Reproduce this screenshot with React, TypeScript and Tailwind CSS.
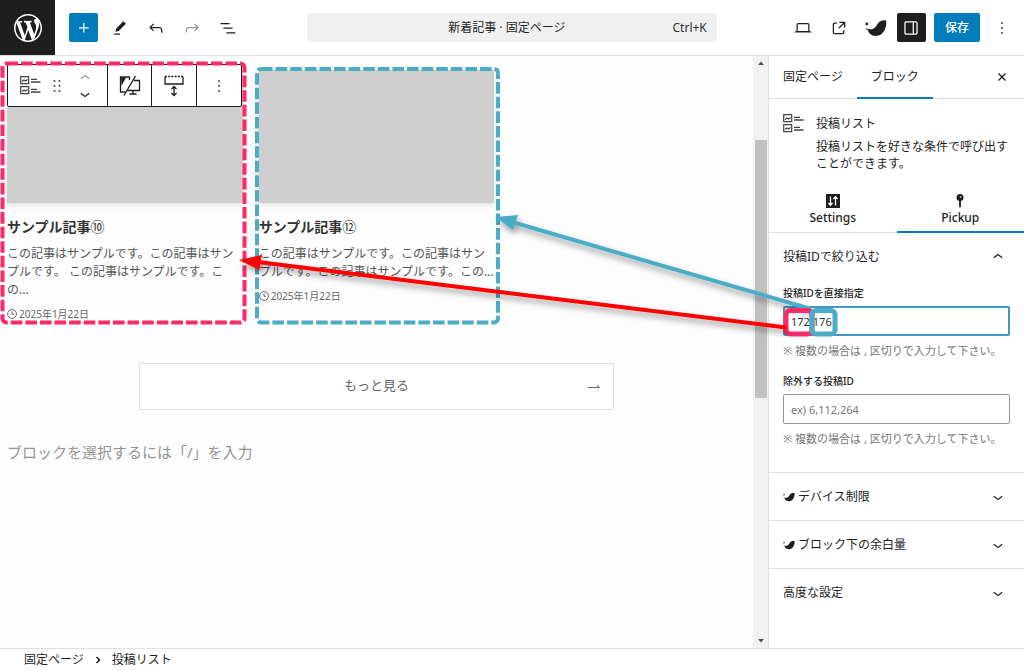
import { useState, type ReactNode } from "react";

const ICONS = {
  plus: "M11 12.5V17.5H12.5V12.5H17.5V11H12.5V6H11V11H6V12.5H11Z",
  pencil: "m19 7-3-3-8.5 8.5-1 4 4-1L19 7Zm-7 11.5H5V20h7v-1.5Z",
  undo: "M18.3 11.7c-.6-.6-1.4-.9-2.3-.9H6.7l2.9-3.3-1.1-1-4.5 5L8.5 16l1-1-2.7-2.7H16c.5 0 .9.2 1.3.5 1 1 1 3.4 1 4.5v.3h1.5v-.2c0-1.5 0-4.3-1.5-5.7z",
  redo: "M15.6 6.5l-1.1 1 2.9 3.3H8c-.9 0-1.7.3-2.3.9-1.4 1.5-1.4 4.2-1.4 5.6v.2h1.5v-.3c0-1.1 0-3.5 1-4.5.3-.3.7-.5 1.3-.5h9.2L14.5 15l1.1 1.1 4.6-4.6-4.6-5z",
  listView: "M3 6h11v1.5H3V6Zm3.5 5.5h11V13h-11v-1.5ZM21 17H10v1.5h11V17Z",
  desktop: "M20.5 16h-.7V8c0-1.1-.9-2-2-2H6.2c-1.1 0-2 .9-2 2v8h-.7c-.8 0-1.5.7-1.5 1.5h20c0-.8-.7-1.5-1.5-1.5zM5.7 8c0-.3.2-.5.5-.5h11.6c.3 0 .5.2.5.5v7.6H5.7V8z",
  external: "M19.5 4.5h-7V6h4.44l-5.97 5.97 1.06 1.06L18 7.06v4.44h1.5v-7Zm-13 1a2 2 0 0 0-2 2v10a2 2 0 0 0 2 2h10a2 2 0 0 0 2-2v-3H17v3a.5.5 0 0 1-.5.5h-10a.5.5 0 0 1-.5-.5v-10a.5.5 0 0 1 .5-.5h3V5.5h-3Z",
  drawer: "M18 4H6c-1.1 0-2 .9-2 2v12c0 1.1.9 2 2 2h12c1.1 0 2-.9 2-2V6c0-1.1-.9-2-2-2zm-4 14.5H6c-.3 0-.5-.2-.5-.5V6c0-.3.2-.5.5-.5h8v13zm4.5-.5c0 .3-.2.5-.5.5h-2.5v-13H18c.3 0 .5.2.5.5v12z",
  more: "M13 19h-2v-2h2v2zm0-6h-2v-2h2v2zm0-6h-2V5h2v2z",
  drag: "M8 7h2V5H8v2zm0 6h2v-2H8v2zm0 6h2v-2H8v2zm6-14v2h2V5h-2zm0 8h2v-2h-2v2zm0 6h2v-2h-2v2z",
  down: "M17.5 11.6L12 16l-5.5-4.4.9-1.2L12 14l4.5-3.6 1 1.2z",
  up: "M6.5 12.4L12 8l5.5 4.4-.9 1.2L12 10l-4.5 3.6-1-1.2z",
  close: "M12 13.06l3.712 3.713 1.061-1.06L13.061 12l3.712-3.712-1.06-1.06L12 10.938 8.288 7.227l-1.061 1.06L10.939 12l-3.712 3.712 1.06 1.061L12 13.061z",
};

function Icon({ name, className = "size-5" }: { name: keyof typeof ICONS; className?: string }) {
  return (
    <svg viewBox="0 0 24 24" fill="currentColor" className={className} aria-hidden="true">
      <path d={ICONS[name]} />
    </svg>
  );
}

function WordPressLogo() {
  return (
    <svg viewBox="0 0 20 20" fill="currentColor" className="size-7" aria-hidden="true">
      <path d="M20 10c0-5.51-4.49-10-10-10C4.48 0 0 4.49 0 10c0 5.52 4.48 10 10 10 5.51 0 10-4.48 10-10zM7.78 15.37L4.37 6.22c.55-.02 1.17-.08 1.17-.08.5-.06.44-1.13-.06-1.11 0 0-1.45.11-2.37.11-.18 0-.37 0-.58-.01C4.12 2.69 6.87 1.11 10 1.11c2.33 0 4.45.87 6.05 2.34-.68-.11-1.65.39-1.65 1.58 0 .74.45 1.36.9 2.1.35.61.55 1.36.55 2.46 0 1.49-1.4 5-1.4 5l-3.03-8.37c.54-.02.82-.17.82-.17.5-.05.44-1.25-.06-1.22 0 0-1.44.12-2.38.12-.87 0-2.33-.12-2.33-.12-.5-.03-.56 1.2-.06 1.22l.92.08 1.26 3.41zM17.41 10c.24-.64.74-1.87.43-4.25.7 1.29 1.05 2.71 1.05 4.25 0 3.29-1.73 6.24-4.4 7.78.97-2.59 1.94-5.2 2.92-7.78zM6.1 18.09C3.12 16.65 1.11 13.53 1.11 10c0-1.3.23-2.48.72-3.59C3.25 10.3 4.67 14.2 6.1 18.09zm4.03-6.63l2.58 6.98c-.86.29-1.76.45-2.71.45-.79 0-1.57-.11-2.29-.33.81-2.38 1.62-4.74 2.42-7.1z" />
    </svg>
  );
}

function SwellIcon({ className }: { className: string }) {
  return (
    <svg viewBox="0 0 22 18" fill="currentColor" className={className} aria-hidden="true">
      <circle cx="1.8" cy="5" r="1.4" />
      <path d="M.5 8.800C4 11 8 11 10.500 8 12.500 5.500 13 1.500 20 1.200c.9 0 1.200.5 1.300 1.500C21.600 9.500 18 16.800 11 16.900 6.500 17 3.800 14.500 3 11.300 1.800 10.800 1 10 .5 8.800z" />
    </svg>
  );
}

function PostListIcon() {
  return (
    <svg viewBox="0 0 21 19" fill="none" stroke="currentColor" className="h-[19px] w-[21px] shrink-0 text-[#444]" aria-hidden="true">
      <path d="M.7.700h8v7h-8zM.7 10.700h8v7h-8z" strokeWidth="1.200" />
      <path d="M2 5.500l2-1.500 1.500 1 2-1.500M2 15.500l2-1.500 1.500 1 2-1.500" strokeWidth="1.200" />
      <path d="M11 3.300h6M11 6h9.500M11 13.300h6M11 16h9.500" strokeWidth="1.300" />
    </svg>
  );
}

function DeviceIcon() {
  return (
    <svg viewBox="0 0 22 20" fill="none" stroke="currentColor" strokeWidth="1.300" className="h-5 w-[22px]" aria-hidden="true">
      <path d="M6.500 16H1.500V1h9v3" />
      <path d="M2 1.500h5L2.500 10z" fill="currentColor" stroke="none" />
      <path d="M15 4.500h5.500v10h-12M14 15v2.500M10.500 18h7" />
      <path d="M16.500 0L5 19.500" />
    </svg>
  );
}

function SpacingIcon() {
  return (
    <svg viewBox="0 0 20 22" fill="none" stroke="currentColor" strokeWidth="1.300" className="h-[22px] w-5" aria-hidden="true">
      <path d="M1 1.500h18" strokeDasharray="2 1.200" />
      <path d="M1 1.500v7.500h18V1.500" />
      <path d="M10 12v8M7.500 14L10 11.500 12.500 14M7.500 18L10 20.500l2.500-2.500" />
    </svg>
  );
}

function Header() {
  return (
    <header className="flex h-14 shrink-0 items-center border-b border-[#e0e0e0] bg-white">
      <div className="flex flex-1 items-center">
        <a
          href="#"
          aria-label="WordPress"
          className="flex size-[55px] items-center justify-center bg-[#1e1e1e] text-white"
        >
          <WordPressLogo />
        </a>
        <button
          type="button"
          aria-label="ブロック挿入"
          className="ml-[14px] flex size-[29px] items-center justify-center rounded-xs bg-[#007cba] text-white"
        >
          <Icon name="plus" />
        </button>
        <div className="ml-3 flex items-center gap-4">
          <button type="button" aria-label="ツール"><Icon name="pencil" /></button>
          <button type="button" aria-label="元に戻す"><Icon name="undo" /></button>
          <button type="button" aria-label="やり直す" className="text-[#949494]"><Icon name="redo" /></button>
          <button type="button" aria-label="リスト表示"><Icon name="listView" /></button>
        </div>
      </div>

      <button
        type="button"
        className="flex h-[29px] w-2/5 items-center rounded-sm bg-[#f0f0f0] px-[10px] text-[#1e1e1e]"
      >
        <span className="flex-1 pl-6">新着記事 · 固定ページ</span>
        <span className="text-[#2f2f2f]">Ctrl+K</span>
      </button>

      <div className="flex flex-1 items-center justify-end gap-2">
        <div className="mr-[2px] flex items-center gap-4">
          <button type="button" aria-label="表示"><Icon name="desktop" /></button>
          <button type="button" aria-label="固定ページを表示"><Icon name="external" /></button>
          <button type="button" aria-label="SWELL"><SwellIcon className="h-[18px] w-[22px]" /></button>
        </div>
        <button
          type="button"
          aria-label="設定"
          className="flex size-[29px] items-center justify-center rounded-xs bg-[#1e1e1e] text-white"
        >
          <Icon name="drawer" />
        </button>
        <button type="button" className="h-[29px] rounded-xs bg-[#007cba] px-[11px] font-medium text-white">
          保存
        </button>
        <button type="button" aria-label="オプション" className="mr-3 ml-1"><Icon name="more" /></button>
      </div>
    </header>
  );
}

function BlockToolbar() {
  return (
    <div
      role="toolbar"
      className="absolute top-2 left-[7px] z-10 flex h-[43px] divide-x divide-[#1e1e1e] rounded-xs border border-[#1e1e1e] bg-white text-[#1e1e1e]"
    >
      <div className="flex w-[100px] items-center pl-3">
        <button type="button" aria-label="投稿リスト"><PostListIcon /></button>
        <button type="button" aria-label="ドラッグ" className="ml-[6px]"><Icon name="drag" /></button>
        <div className="ml-2 flex flex-col">
          <button type="button" aria-label="上に移動" className="flex h-4 items-center text-[#949494]"><Icon name="up" /></button>
          <button type="button" aria-label="下に移動" className="flex h-4 items-center"><Icon name="down" /></button>
        </div>
      </div>
      <button type="button" aria-label="デバイス制限" className="flex w-11 items-center justify-center"><DeviceIcon /></button>
      <button type="button" aria-label="余白量" className="flex w-[45px] items-center justify-center"><SpacingIcon /></button>
      <button type="button" aria-label="オプション" className="flex w-11 items-center justify-center"><Icon name="more" /></button>
    </div>
  );
}

const POSTS = [
  {
    title: "サンプル記事",
    mark: "⑩",
    lines: ["この記事はサンプルです。この記事はサン", "プルです。 この記事はサンプルです。こ", "の..."],
    date: "2025年1月22日",
  },
  {
    title: "サンプル記事",
    mark: "⑫",
    lines: ["この記事はサンプルです。この記事はサン", "プルです。この記事はサンプルです。この..."],
    date: "2025年1月22日",
  },
];

function PostCard({ title, mark, lines, date }: (typeof POSTS)[number]) {
  return (
    <article>
      <div className="aspect-video bg-[#cecece] shadow-[0_2px_6px_rgba(0,0,0,0.12)]" />
      <h2 className="mt-[14px] text-sm leading-5 font-bold text-[#333]">
        {title}
        <span className="font-normal">{mark}</span>
      </h2>
      <p className="mt-2 leading-[18px] whitespace-nowrap text-[#555]">
        {lines.map((line) => (
          <span key={line} className="block">{line}</span>
        ))}
      </p>
      <p className="mt-2 flex items-center gap-[2px] text-[10px] leading-[14px] text-[#666]">
        <svg viewBox="0 0 10 10" fill="none" stroke="currentColor" className="size-[10px]" aria-hidden="true">
          <circle cx="5" cy="5" r="4.400" />
          <path d="M5 2.300V5.300h2" />
        </svg>
        <time dateTime="2025-01-22">{date}</time>
      </p>
    </article>
  );
}

function Canvas() {
  return (
    <main className="relative min-w-0 flex-1 overflow-hidden bg-[#fdfdfd] px-[7px] pt-[14px]">
      <BlockToolbar />
      <div className="grid grid-cols-3 gap-4">
        {POSTS.map((post) => (
          <PostCard key={post.mark} {...post} />
        ))}
      </div>
      <a
        href="#"
        className="mx-auto mt-[42px] flex h-[47px] w-[475px] max-w-full items-center border border-[#ddd] bg-white px-[13px] text-[13px] leading-5 text-[#666]"
      >
        <span className="flex-1 pb-[2px] pl-3 text-center">もっと見る</span>
        <svg viewBox="0 0 12 6" fill="none" stroke="currentColor" className="h-[6px] w-3" aria-hidden="true">
          <path d="M0 4.500h11.500L9 2" />
        </svg>
      </a>
      <p className="mt-8 text-[15px] leading-5 text-[#949494]">ブロックを選択するには「/」を入力</p>
    </main>
  );
}

function Scrollbar() {
  return (
    <div className="flex w-[15px] shrink-0 flex-col items-center bg-[#f1f1f1] py-[5px] text-[#505050]" aria-hidden="true">
      <svg viewBox="0 0 8 4" fill="currentColor" className="h-1 w-2"><path d="M1 4l3-3.500L7 4z" /></svg>
      <div className="flex w-full flex-1 flex-col items-center">
        <div className="h-[13%]" />
        <div className="h-[45%] w-3 bg-[#c1c1c1]" />
      </div>
      <svg viewBox="0 0 8 4" fill="currentColor" className="h-1 w-2"><path d="M1 0l3 3.500L7 0z" /></svg>
    </div>
  );
}

function IdField({
  id,
  label,
  value,
  placeholder,
  focused,
  onChange,
}: {
  id: string;
  label: string;
  value: string;
  placeholder?: string;
  focused?: boolean;
  onChange: (value: string) => void;
}) {
  return (
    <div>
      <label htmlFor={id} className="block text-[10px] leading-[14px] font-medium">{label}</label>
      <input
        id={id}
        type="text"
        value={value}
        placeholder={placeholder}
        onChange={(e) => onChange(e.target.value)}
        className={
          focused
            ? "mt-[6px] h-[30px] w-full rounded-xs border-2 border-[#3c9ac9] px-[6px] text-[11px] text-[#2c3338] outline-none"
            : "mt-[6px] h-[30px] w-full rounded-xs border border-[#949494] px-[7px] text-[11px] text-[#2c3338] outline-none placeholder:text-[#757575]"
        }
      />
      <p className="mt-[7px] text-[11px] leading-4 whitespace-nowrap text-[#757575]">
        ※ 複数の場合は , 区切りで入力して下さい。
      </p>
    </div>
  );
}

function ClosedPanel({ children }: { children: ReactNode }) {
  return (
    <button
      type="button"
      aria-expanded="false"
      className="flex h-[48px] w-full items-center border-t border-[#e0e0e0] pr-4 pl-[14px] text-left"
    >
      <span className="flex flex-1 items-center gap-[3px]">{children}</span>
      <Icon name="down" />
    </button>
  );
}

function Sidebar() {
  const [include, setInclude] = useState("172,176");
  const [exclude, setExclude] = useState("");

  return (
    <aside className="w-64 shrink-0 overflow-hidden border-l border-[#e0e0e0] bg-white">
      <div className="flex h-[43px] border-b border-[#e0e0e0]">
        <button type="button" className="px-[14px]">固定ページ</button>
        <button type="button" className="-mb-px border-b-2 border-[#007cba] px-[14px]">ブロック</button>
        <button type="button" aria-label="閉じる" className="mr-3 ml-auto"><Icon name="close" /></button>
      </div>

      <div className="flex gap-3 px-[14px] pt-[15px]">
        <PostListIcon />
        <div>
          <h2 className="leading-[20px]">投稿リスト</h2>
          <p className="mt-1 leading-[17px]">投稿リストを好きな条件で呼び出すことができます。</p>
        </div>
      </div>

      <div className="mt-[14px] flex h-[47px] border-b border-[#e0e0e0] font-medium">
        <button type="button" className="flex flex-1 flex-col items-center pt-2">
          <svg viewBox="0 0 14 14" className="size-[14px]" aria-hidden="true">
            <path d="M0 0h14v14H0z" fill="#1e1e1e" />
            <path d="M4.500 2.500v8.500M2.500 9l2 2.200 2-2.200M9.500 11.500V3M7.500 5l2-2.200 2 2.200" fill="none" stroke="#fff" strokeWidth="1.300" />
          </svg>
          <span className="mt-[2px] leading-4">Settings</span>
        </button>
        <button type="button" className="-mb-px flex flex-1 flex-col items-center border-b-2 border-[#007cba] pt-2">
          <svg viewBox="0 0 14 14" className="size-[14px]" aria-hidden="true">
            <circle cx="7" cy="3.500" r="3.500" fill="#1e1e1e" />
            <circle cx="7.700" cy="3" r=".8" fill="#fff" />
            <path d="M6.100 6h1.800v6.500l-.9 1.500-.9-1.500z" fill="#1e1e1e" />
          </svg>
          <span className="mt-[2px] leading-4">Pickup</span>
        </button>
      </div>

      <section>
        <button
          type="button"
          aria-expanded="true"
          className="flex h-[47px] w-full items-center pr-4 pl-[14px] text-left"
        >
          <span className="flex-1">投稿IDで絞り込む</span>
          <Icon name="up" />
        </button>
        <div className="flex flex-col gap-[15px] px-[14px] pt-[6px] pb-[25px]">
          <IdField id="include-ids" label="投稿IDを直接指定" value={include} onChange={setInclude} focused />
          <IdField
            id="exclude-ids"
            label="除外する投稿ID"
            value={exclude}
            placeholder="ex) 6,112,264"
            onChange={setExclude}
          />
        </div>
      </section>

      <ClosedPanel>
        <SwellIcon className="h-[10px] w-3" />
        デバイス制限
      </ClosedPanel>
      <ClosedPanel>
        <SwellIcon className="h-[10px] w-3" />
        ブロック下の余白量
      </ClosedPanel>
      <ClosedPanel>高度な設定</ClosedPanel>
    </aside>
  );
}

// Dashed frames and arrows linking each ID to its card
function Annotations() {
  return (
    <svg
      width="1024"
      height="671"
      fill="none"
      className="pointer-events-none absolute top-0 left-0 z-20"
      aria-hidden="true"
    >
      <defs>
        <filter id="arrow-shadow" x="-10%" y="-10%" width="120%" height="130%">
          <feDropShadow dx="2" dy="4" stdDeviation="3" floodOpacity="0.4" />
        </filter>
      </defs>
      <rect x="2.500" y="63.500" width="242" height="259" rx="4" stroke="#fb2b69" strokeWidth="4" strokeDasharray="11.600 3" />
      <rect x="257" y="69" width="241" height="253.500" rx="4" stroke="#4bacc6" strokeWidth="4" strokeDasharray="11.600 3" />
      <g filter="url(#arrow-shadow)">
        <path d="M811 309L512 222" stroke="#4bacc6" strokeWidth="4" />
        <path d="M495 217l23-2-5 15z" fill="#4bacc6" />
      </g>
      <rect x="786" y="310.500" width="26" height="23.500" rx="4" stroke="#fb2b69" strokeWidth="5" />
      <rect x="812" y="310.500" width="23" height="23.500" rx="4" stroke="#4bacc6" strokeWidth="5" />
      <g filter="url(#arrow-shadow)">
        <path d="M786 327.500L258 262" stroke="#f00" strokeWidth="4" />
        <path d="M239 260l22.500-5-2 15z" fill="#f00" />
      </g>
    </svg>
  );
}

export default function App() {
  return (
    <div className="relative flex h-screen flex-col overflow-hidden bg-white font-['Noto_Sans','Noto_Sans_CJK_JP',sans-serif] text-xs text-[#1e1e1e]">
      <Header />
      <div className="flex min-h-0 flex-1">
        <Canvas />
        <Scrollbar />
        <Sidebar />
      </div>
      <nav className="flex h-[23px] shrink-0 items-center gap-[10px] border-t border-[#e0e0e0] px-6" aria-label="パンくず">
        <a href="#">固定ページ</a>
        <svg viewBox="0 0 8 8" fill="none" stroke="currentColor" strokeWidth="1.500" className="size-2" aria-hidden="true">
          <path d="M2.500 1l3 3-3 3" />
        </svg>
        <a href="#">投稿リスト</a>
      </nav>
      <Annotations />
    </div>
  );
}
